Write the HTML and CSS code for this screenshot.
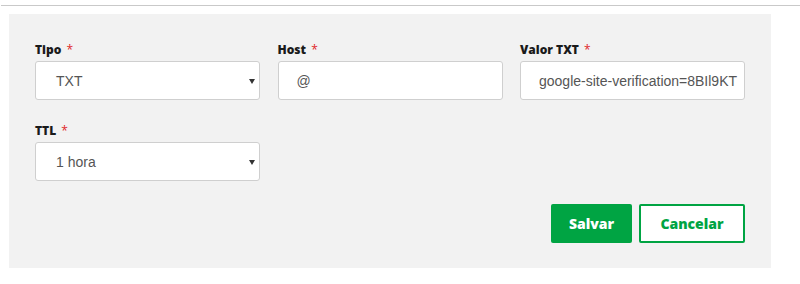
FILE: index.html
```html
<!DOCTYPE html>
<html lang="pt">
<head>
<meta charset="utf-8">
<link rel="stylesheet" href="styles.css">
</head>
<body>
<div class="rule"></div>
<form class="panel">
  <div class="grid">
    <div class="field">
      <label class="label">Tipo <span class="req">*</span></label>
      <div class="control select"><span class="value">TXT</span><span class="caret"></span></div>
    </div>
    <div class="field">
      <label class="label">Host <span class="req">*</span></label>
      <div class="control input"><span class="value">@</span></div>
    </div>
    <div class="field">
      <label class="label">Valor TXT <span class="req">*</span></label>
      <div class="control input"><span class="value">google-site-verification=8BIl9KT</span></div>
    </div>
    <div class="field">
      <label class="label">TTL <span class="req">*</span></label>
      <div class="control select"><span class="value">1 hora</span><span class="caret"></span></div>
    </div>
  </div>
  <div class="actions">
    <button type="button" class="btn primary">Salvar</button>
    <button type="button" class="btn secondary">Cancelar</button>
  </div>
</form>
</body>
</html>
```
FILE: styles.css
```css
html, body {
  margin: 0;
  padding: 0;
  background: #ffffff;
}
body {
  width: 800px;
  height: 284px;
  overflow: hidden;
  font-family: "Liberation Sans", Arial, sans-serif;
}
.rule {
  margin-top: 5px;
  height: 1px;
  background: #c9c9c9;
  margin-left: 1px;
}
.panel {
  margin: 8px 0 0 9px;
  width: 762px;
  height: 254px;
  box-sizing: border-box;
  background: #f2f2f2;
  padding: 28px 26px 0 26px;
  display: flex;
  flex-direction: column;
}
.grid {
  display: grid;
  grid-template-columns: 225px 225px 225px;
  column-gap: 17px;
  row-gap: 23px;
  justify-content: space-between;
}
.field {
  display: flex;
  flex-direction: column;
}
.label {
  font-family: "Open Sans", sans-serif;
  font-weight: 800;
  font-size: 12px;
  line-height: 16px;
  color: #1a1a1a;
  height: 19px;
}
.req {
  color: #e0262a;
  margin-left: 2px;
  font-weight: 400;
}
.control {
  height: 39px;
  box-sizing: border-box;
  background: #fff;
  border: 1px solid #cfcfcf;
  border-radius: 3px;
  display: flex;
  align-items: center;
  font-size: 14px;
  color: #555;
  position: relative;
}
.input {
  padding-left: 18px;
  padding-right: 0;
}
.select {
  padding-left: 20px;
}
.value {
  white-space: nowrap;
}
.caret {
  position: absolute;
  right: 4px;
  top: 17px;
  width: 0;
  height: 0;
  border-left: 3px solid transparent;
  border-right: 3px solid transparent;
  border-top: 5px solid #333;
}
.actions {
  display: flex;
  justify-content: flex-end;
  gap: 7px;
  margin-top: 23px;
}
.btn {
  height: 39px;
  box-sizing: border-box;
  font-family: "Open Sans", sans-serif;
  font-weight: 800;
  font-size: 14px;
  border-radius: 2px;
  cursor: pointer;
  padding: 0;
}
.primary {
  width: 81px;
  background: #00a443;
  color: #fff;
  border: none;
}
.secondary {
  width: 106px;
  background: #fff;
  color: #00a443;
  border: 2px solid #00a443;
}
```
